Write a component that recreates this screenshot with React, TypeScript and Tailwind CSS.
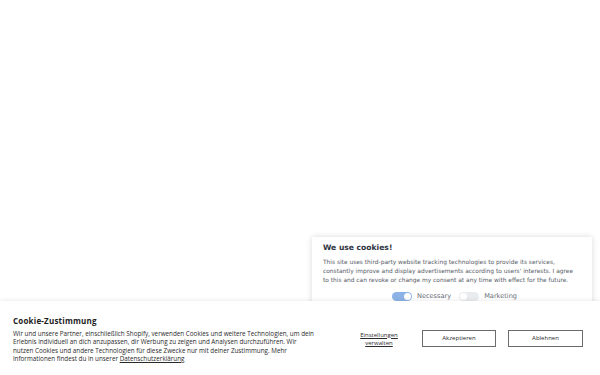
import React, { useState } from 'react';

const Toggle: React.FC<{ on: boolean; onChange: () => void }> = ({ on, onChange }) => (
  <button
    type="button"
    onClick={onChange}
    className={`flex h-[9px] w-[20px] items-center rounded-full px-[1px] ${on ? 'justify-end bg-[#8db3e6]' : 'justify-start bg-[#e9ebee]'}`}
  >
    <span className="block h-[7px] w-[7px] rounded-full bg-white" />
  </button>
);

const App: React.FC = () => {
  const [necessary, setNecessary] = useState(true);
  const [marketing, setMarketing] = useState(false);

  return (
    <div className="relative h-[375px] w-[600px] overflow-hidden bg-white">
      {/* third-party cookie popup, partly hidden behind the banner */}
      <div className="absolute left-[312px] top-[237px] w-[280px] bg-white pl-[11px] pr-[6px] pt-[5px] pb-[20px] shadow-[0_0_6px_rgba(0,0,0,0.15)] [font-family:'DejaVu_Sans',sans-serif]">
        <h2 className="text-[7.6px] font-bold leading-[12px] text-[#2d3340]">We use cookies!</h2>
        <p className="mt-[3.5px] whitespace-nowrap text-[5.9px] leading-[9px] text-[#555b66]">
          This site uses third-party website tracking technologies to provide its services,
          <br />
          constantly improve and display advertisements according to users' interests. I agree
          <br />
          to this and can revoke or change my consent at any time with effect for the future.
        </p>
        <div className="mt-[7px] flex items-center justify-center gap-[5px] text-[6.6px] text-[#666c75]">
          <Toggle on={necessary} onChange={() => setNecessary(!necessary)} />
          <span className="mr-[3px]">Necessary</span>
          <Toggle on={marketing} onChange={() => setMarketing(!marketing)} />
          <span>Marketing</span>
        </div>
      </div>

      {/* shop cookie banner */}
      <div className="absolute inset-x-0 bottom-0 flex h-[74px] items-start bg-white pl-[13px] pr-[17px] pt-[14px] shadow-[0_-1px_4px_rgba(0,0,0,0.08)] [font-family:'Open_Sans',sans-serif]">
        <div className="w-[302px]">
          <h1 className="text-[8px] font-bold leading-[12px] tracking-[0.2px] text-[#1c1c1c]">Cookie-Zustimmung</h1>
          <p className="mt-[3px] text-[6.3px] leading-[8.3px] text-[#2a2a2a]">
            Wir und unsere Partner, einschließlich Shopify, verwenden Cookies und weitere Technologien, um dein
            Erlebnis individuell an dich anzupassen, dir Werbung zu zeigen und Analysen durchzuführen. Wir
            nutzen Cookies und andere Technologien für diese Zwecke nur mit deiner Zustimmung. Mehr
            informationen findest du in unserer <a href="#" className="underline">Datenschutzerklärung</a>
          </p>
        </div>
        <div className="ml-auto mt-[15px] flex items-center">
          <a href="#" className="w-[44px] text-center text-[6px] leading-[8px] text-[#2a2a2a] underline">
            Einstellungen verwalten
          </a>
          <button className="ml-[21px] h-[17px] w-[74px] border border-[#6b6b6b] text-[6px] text-[#2a2a2a]">Akzeptieren</button>
          <button className="ml-[12px] h-[17px] w-[75px] border border-[#6b6b6b] text-[6px] text-[#2a2a2a]">Ablehnen</button>
        </div>
      </div>
    </div>
  );
};

export default App;
